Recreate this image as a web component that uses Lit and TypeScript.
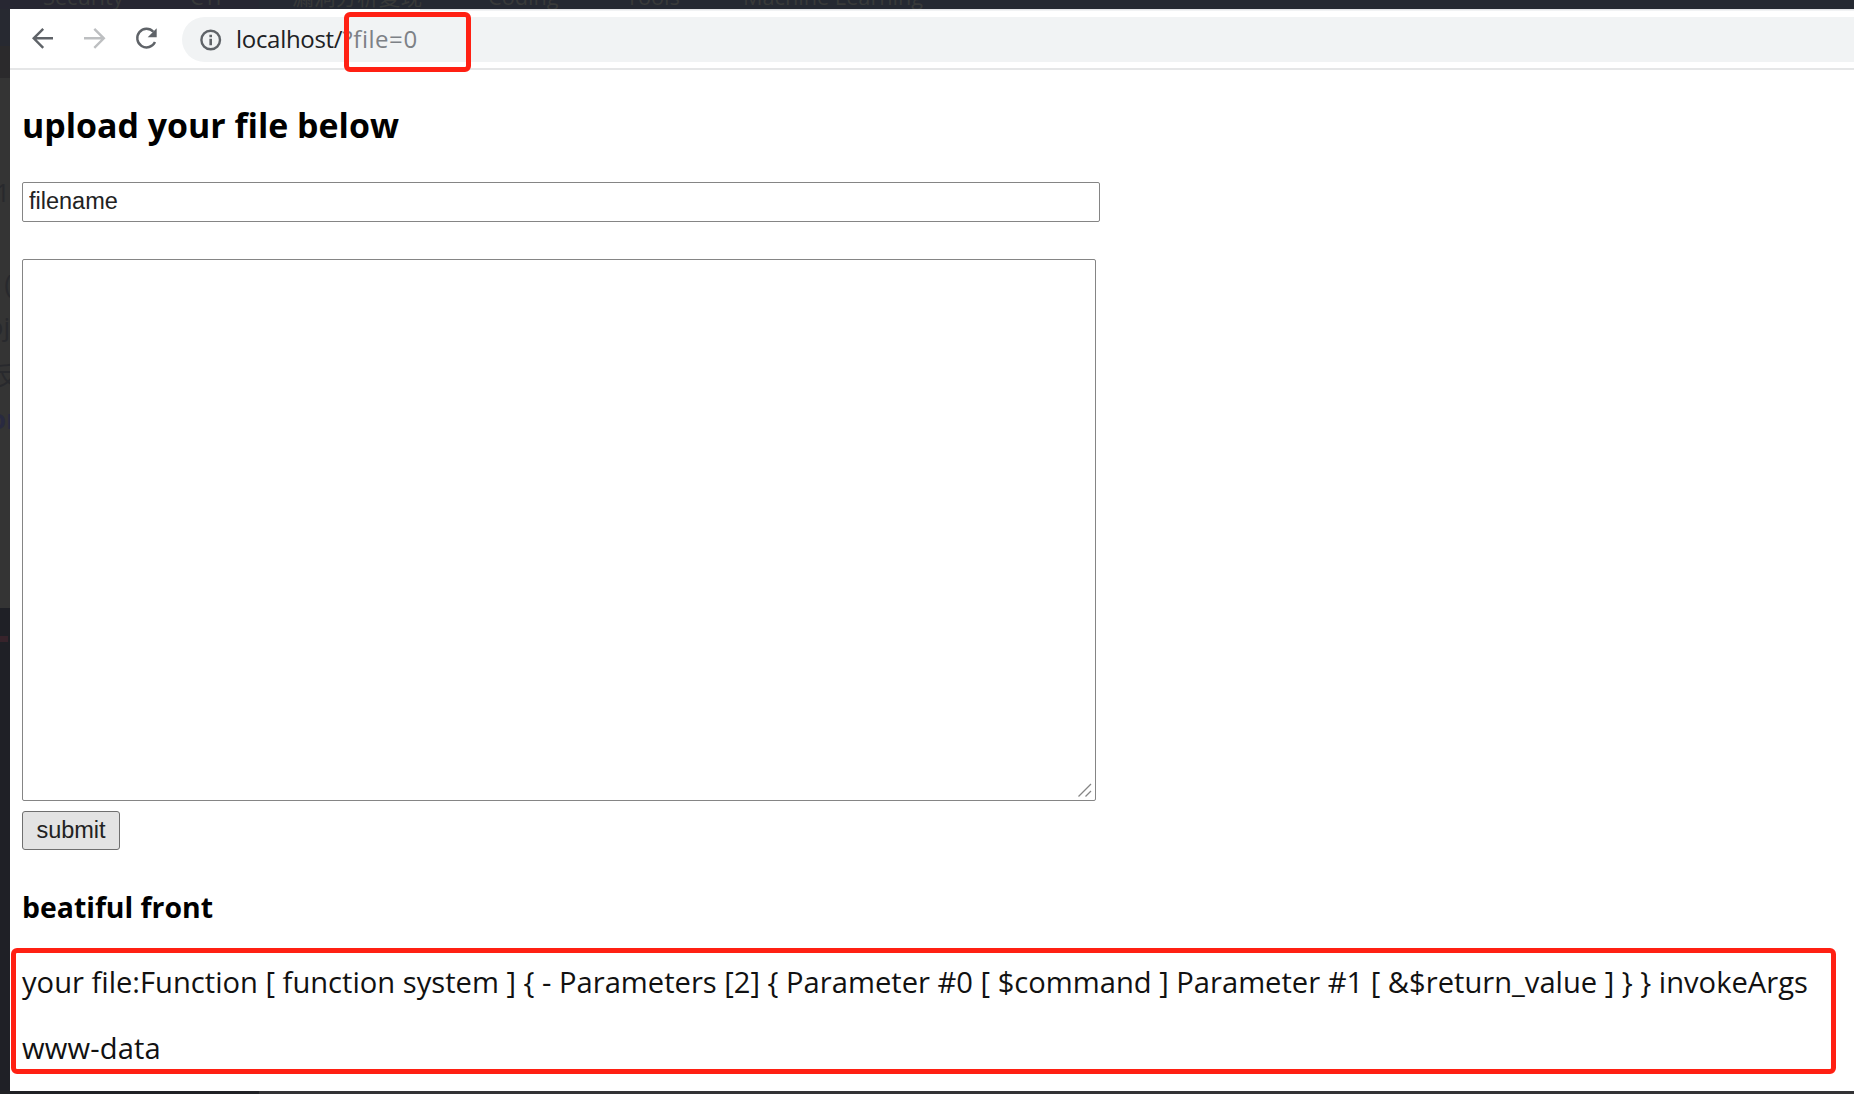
import { LitElement, html, css } from "lit";
import { customElement } from "lit/decorators.js";

@customElement("app-root")
export class AppRoot extends LitElement {
  static styles = css`
    :host { display: block; }
    * { box-sizing: border-box; }
    .screen {
      width: 1854px; height: 1094px; overflow: hidden; position: relative;
      display: grid; grid-template-columns: 10px 1fr; grid-template-rows: 9px 1082px 3px;
      font-family: "Open Sans", "Noto Sans", sans-serif; color: #111; background: #333335;
    }
    .tabs {
      grid-column: 1 / 3; background: linear-gradient(90deg, #272732 0 259px, #252932 259px); color: #383a3a; overflow: hidden;
      font-size: 21.7px; line-height: 28px; white-space: nowrap; position: relative;
    }
    .tabs span { position: absolute; top: -17px; font-family: "Open Sans", "Noto Sans CJK SC", sans-serif; }
    .t1 { left: 43px; } .t2 { left: 190px; } .t3 { left: 292px; }
    .t4 { left: 488px; } .t5 { left: 626px; } .t6 { left: 743px; }
    .side {
      background: linear-gradient(#272931 0 37px, #2b2a2c 37px 69px, #343434 69px 599px, #1f2026 599px);
      overflow: hidden; position: relative; color: #28292d; font-size: 26px; line-height: 30px;
    }
    .side span { position: absolute; right: 0; white-space: nowrap; font-family: "Open Sans", "Noto Sans CJK SC", sans-serif; }
    .side .s1 { top: 168px; right: 0; }
    .side .s2 { top: 259px; right: -2px; }
    .side .s3 { top: 302px; }
    .side .s4 { top: 351px; right: -9px; }
    .side .s5 { top: 395px; right: -8px; color: #292a40; font-weight: 700; }
    .side .mark { position: absolute; left: 0; top: 627px; width: 8px; height: 6px; background: #37232b; }
    .window { background: #fff; display: flex; flex-direction: column; }
    .toolbar {
      height: 61px; border-bottom: 2px solid #e5e6e7; display: flex; align-items: flex-start; padding: 8px 0 0 20px; flex: none;
      background: linear-gradient(#e3e5e8, #e3e5e8) 410px 0 / 100% 1.5px no-repeat;
    }
    .nav { width: 26px; height: 44px; margin-right: 26px; }
    .forward { margin-right: 25px; }
    .reload { margin-right: 23px; }
    .omnibox { flex: 1; height: 45px; border-radius: 23px 0 0 23px; background: #f1f3f4; display: flex; align-items: center; padding-left: 17px; }
    .info { width: 24px; height: 24px; margin-right: 13px; }
    .url { font-size: 24px; line-height: 43px; padding-bottom: 2px; white-space: pre; color: #202124; letter-spacing: -0.3px; }
    .url i { font-style: normal; color: #7d8186; letter-spacing: 0.55px; }
    .page { padding-left: 12px; display: flex; flex-direction: column; align-items: flex-start; }
    h2, h3, p { margin: 0; color: #000; white-space: nowrap; }
    h2 { font-size: 33.9px; line-height: 46px; margin-top: 32px; }
    .name, .area, .submit { font-family: "Liberation Sans", sans-serif; font-size: 23.5px; border: 1px solid #858585; border-radius: 2px; color: #222; }
    .name { margin: 34px 0 0; width: 1078px; height: 40px; padding: 0 0 2px 6px; background: #fff; }
    .area { margin-top: 37px; width: 1074px; height: 542px; display: flex; align-items: flex-end; justify-content: flex-end; padding: 2px; }
    .submit { margin: 10px 0 0; width: 98px; height: 39px; background: #e3e3e3; padding: 0 0 1px; border-radius: 3px; border-color: #6f6f6f; }
    h3 { font-size: 28.4px; line-height: 40px; margin-top: 37px; }
    p { font-size: 29.15px; line-height: 40px; margin-top: 35px; color: #111; }
    .data { margin-top: 26px; letter-spacing: 0.15px; }
    .mark-box { position: absolute; border: 5px solid #ff2013; border-radius: 6px; }
    .query { left: 343.5px; top: 12px; width: 127px; height: 60px; }
    .output { left: 11px; top: 948px; width: 1825px; height: 126px; }
    .floor { grid-column: 1 / 3; background: linear-gradient(90deg, #202125 0 259px, #333335 259px); }
  `;

  render() {
    return html`
      <div class="screen">
        <div class="tabs">
          <span class="t1">Security</span><span class="t2">CTF</span>
          <span class="t3">漏洞分析复现</span><span class="t4">Coding</span>
          <span class="t5">Tools</span><span class="t6">Machine Learning</span>
        </div>
        <div class="side">
          <span class="s1">1</span><span class="s2">(</span><span class="s3">oj</span>
          <span class="s4">反</span><span class="s5">or</span>
          <div class="mark"></div>
        </div>
        <div class="window">
          <div class="toolbar">
            <svg class="nav" viewBox="0 0 26 44" fill="none" stroke="#5f6368" stroke-width="2.4"><path d="M23 21.3H4.5M13.2 11.8L3.7 21.3L13.2 30.8"/></svg>
            <svg class="nav forward" viewBox="0 0 26 44" fill="none" stroke="#bdbfc1" stroke-width="2.4"><path d="M2 21.3H21M12.3 11.8L21.8 21.3L12.3 30.8"/></svg>
            <svg class="nav reload" viewBox="0 0 26 44"><path d="M20.4 14.8A9.3 9.3 0 1 0 22 25" fill="none" stroke="#5f6368" stroke-width="2.4"/><path d="M23.7 11.2V20.2H14.7Z" fill="#5f6368"/></svg>
            <div class="omnibox">
              <svg class="info" viewBox="0 0 24 24"><circle cx="11.7" cy="12" r="9.3" fill="none" stroke="#5f6368" stroke-width="2.4"/><path d="M10.4 10.7h2.6v6.5h-2.6zM10.4 6.7h2.6v2.5h-2.6z" fill="#5f6368"/></svg>
              <span class="url">localhost/<i>?file=0</i></span>
            </div>
          </div>
          <div class="page">
            <h2>upload your file below</h2>
            <input class="name" value="filename" />
            <div class="area"><svg width="16" height="16" viewBox="0 0 16 16" stroke="#858585" stroke-width="1.3"><path d="M1.5 14.5L14 2M8.5 14.5L14 9"/></svg></div>
            <button class="submit">submit</button>
            <h3>beatiful front</h3>
            <p class="dump">your file:Function [ function system ] { - Parameters [2] { Parameter #0 [ $command ] Parameter #1 [ &amp;$return_value ] } } invokeArgs</p>
            <p class="data">www-data</p>
          </div>
        </div>
        <div class="floor"></div>
        <div class="mark-box query"></div>
        <div class="mark-box output"></div>
      </div>
    `;
  }
}
